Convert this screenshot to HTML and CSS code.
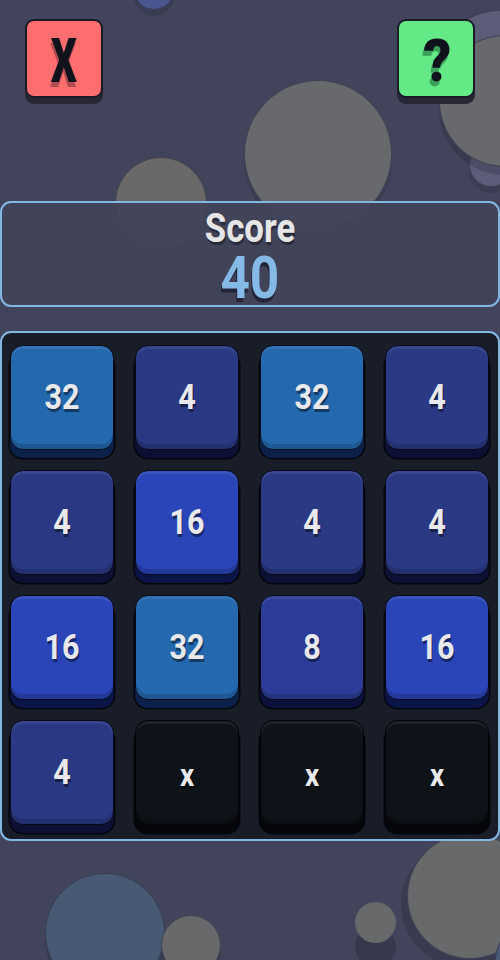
FILE: index.html
```html
<!DOCTYPE html>
<html>
<head>
<meta charset="utf-8">
<link rel="stylesheet" href="styles.css">
</head>
<body>
<div class="bubbles">
  <span class="bub b1"></span>
  <span class="bub b2"></span>
  <span class="bub b4"></span>
  <span class="bub b3"></span>
  <span class="bub b5"></span>
  <span class="bub b6"></span>
  <span class="bub b8"></span>
  <span class="bub b9"></span>
  <span class="bub b10"></span>
  <span class="bub b11"></span>
  <span class="bub b12"></span>
</div>
<main class="app">
  <header class="topbar">
    <button class="btn btn-close"><span class="glyph">X</span></button>
    <button class="btn btn-help"><span class="glyph glyph-q">?</span></button>
  </header>
  <section class="score">
    <div class="score-label"><span class="cond">Score</span></div>
    <div class="score-value"><span class="cond">40</span></div>
  </section>
  <section class="board">
    <div class="tile t32"><span class="cond">32</span></div>
    <div class="tile t4"><span class="cond">4</span></div>
    <div class="tile t32"><span class="cond">32</span></div>
    <div class="tile t4"><span class="cond">4</span></div>
    <div class="tile t4"><span class="cond">4</span></div>
    <div class="tile t16"><span class="cond">16</span></div>
    <div class="tile t4"><span class="cond">4</span></div>
    <div class="tile t4"><span class="cond">4</span></div>
    <div class="tile t16"><span class="cond">16</span></div>
    <div class="tile t32"><span class="cond">32</span></div>
    <div class="tile t8"><span class="cond">8</span></div>
    <div class="tile t16"><span class="cond">16</span></div>
    <div class="tile t4"><span class="cond">4</span></div>
    <div class="tile empty"><span class="cond">x</span></div>
    <div class="tile empty"><span class="cond">x</span></div>
    <div class="tile empty"><span class="cond">x</span></div>
  </section>
</main>
</body>
</html>
```
FILE: styles.css
```css
* { box-sizing: border-box; }
html, body {
  margin: 0;
  padding: 0;
}
body {
  width: 500px;
  height: 960px;
  overflow: hidden;
  background: #41445a;
  position: relative;
  font-family: Roboto, "DejaVu Sans", sans-serif;
}

/* decorative background bubbles */
.bubbles {
  position: absolute;
  inset: 0;
  overflow: hidden;
}
.bub {
  position: absolute;
  border-radius: 50%;
  border: 1.5px solid rgba(50, 52, 72, 0.7);
  box-shadow: 0 6px 0 rgba(30, 32, 48, 0.18);
}
.b1 { left: 134px; top: -30px; width: 40px; height: 40px; background: #4b5590; }
.b2 { left: 435px; top: 10px; width: 130px; height: 130px; background: #5b5d79; }
.b4 { left: 469px; top: 143px; width: 44px; height: 44px; background: #5b5d79; }
.b3 { left: 439px; top: 35px; width: 132px; height: 132px; background: #67696c; box-shadow: 0 8px 0 rgba(30, 32, 48, 0.25); }
.b5 { left: 244px; top: 80px; width: 148px; height: 148px; background: #67696c; }
.b6 { left: 115px; top: 157px; width: 92px; height: 92px; background: #6a6868; }
.b8 { left: 45px; top: 873px; width: 120px; height: 120px; background: #485a73; }
.b9 { left: 161px; top: 915px; width: 60px; height: 60px; background: #67696b; }
.b10 { left: 355px; top: 902px; width: 41px; height: 41px; background: #67696b; border: none; box-shadow: 0 24px 0 rgba(30, 32, 48, 0.3); }
.b11 { left: 407px; top: 833px; width: 126px; height: 126px; background: #67696b; box-shadow: -6px 8px 0 rgba(30, 32, 48, 0.25); }
.b12 { left: 495px; top: 925px; width: 70px; height: 70px; background: #485a73; }

.app {
  position: relative;
  display: flex;
  flex-direction: column;
}

.topbar {
  display: flex;
  justify-content: space-between;
  padding: 19px 25px 0 25px;
  height: 201px;
}
.btn {
  width: 78px;
  height: 79px;
  padding: 0;
  border: 2px solid #1a1b27;
  border-radius: 9px;
  box-shadow: 0 6px 0 #262836;
  display: flex;
  align-items: center;
  justify-content: center;
  font-family: Roboto, "DejaVu Sans", sans-serif;
  font-weight: 900;
  font-size: 62px;
  line-height: 1;
  color: #10131c;
  cursor: pointer;
}
.btn-close {
  background: #fe6e6f;
  text-shadow: -1px 5px 0 #b24a52;
}
.btn-help {
  background: #63ea86;
  text-shadow: -2px 5px 0 #3c9f5a;
}
.glyph {
  display: inline-block;
  transform: scaleX(0.66);
  margin-top: 4px;
}
.glyph-q {
  font-size: 60px;
  transform: scaleX(0.92);
  margin-left: 2px;
}

.cond {
  display: inline-block;
  transform: scaleX(0.87);
}

.score {
  height: 106px;
  border: 2px solid #84b6e3;
  border-radius: 11px;
  background: rgba(65, 68, 90, 0.95);
  text-align: center;
  font-weight: 700;
  display: flex;
  flex-direction: column;
  align-items: center;
}
.score-label {
  font-size: 40px;
  line-height: 42px;
  margin-top: 5px;
  color: #e6e6e6;
  text-shadow: 1px 3px 0 #292b3b;
}
.score-value {
  font-size: 59px;
  line-height: 54px;
  margin-top: 1px;
  color: #85b9e6;
  text-shadow: -1px 4px 0 #22243a;
}

.board {
  margin-top: 24px;
  height: 510px;
  border: 2px solid #84b6e3;
  border-radius: 11px;
  background: rgba(24, 28, 38, 0.96);
  padding: 12px 8px 6px 8px;
  display: grid;
  grid-template-columns: repeat(4, 104px);
  grid-template-rows: repeat(4, 105px);
  column-gap: 21px;
  row-gap: 20px;
}
.tile {
  --face: #2b3a86;
  --base: #0e1236;
  height: 105px;
  border-radius: 13px;
  border: 1.5px solid #070a16;
  background: var(--face);
  box-shadow:
    inset 0 3px 0 rgba(255, 255, 255, 0.07),
    inset 0 -5px 0 rgba(0, 0, 0, 0.16),
    0 8px 0 var(--base),
    0 8px 0 1.5px #05060c;
  display: flex;
  align-items: center;
  justify-content: center;
  font-size: 35px;
  font-weight: 700;
  color: #e9e9ec;
  text-shadow: 1px 3px 0 rgba(0, 0, 0, 0.45);
}
.t32 { --face: #2468ae; --base: #0c2149; }
.t4 { --face: #2b3985; --base: #0d1035; }
.t16 { --face: #2a45b7; --base: #0b1446; }
.t8 { --face: #2c3c98; --base: #0c113c; }
.empty {
  --face: #0e1219;
  --base: #06070a;
  border-color: #020305;
  font-size: 32px;
  padding-top: 4px;
}
```
